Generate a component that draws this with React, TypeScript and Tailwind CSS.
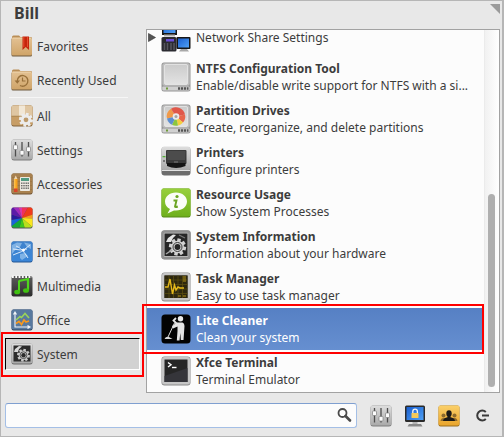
import type { ReactNode } from "react";

function Defs() {
  return (
    <svg className="absolute h-0 w-0" aria-hidden="true">
      <defs>
        <linearGradient id="tan" x1="0" y1="0" x2="0" y2="1">
          <stop offset="0" stopColor="#e3c193" />
          <stop offset="1" stopColor="#cfa468" />
        </linearGradient>
        <linearGradient id="silver" x1="0" y1="0" x2="0" y2="1">
          <stop offset="0" stopColor="#dedede" />
          <stop offset="1" stopColor="#a9a9a9" />
        </linearGradient>
        <linearGradient id="drive" x1="0" y1="0" x2="0" y2="1">
          <stop offset="0" stopColor="#cbcbcb" />
          <stop offset="1" stopColor="#e3e3e3" />
        </linearGradient>
        <linearGradient id="dark" x1="0" y1="0" x2="0" y2="1">
          <stop offset="0" stopColor="#5c5c5c" />
          <stop offset="1" stopColor="#2c2c2c" />
        </linearGradient>
        <linearGradient id="blue" x1="0" y1="0" x2="0" y2="1">
          <stop offset="0" stopColor="#3f82cc" />
          <stop offset="1" stopColor="#3a86d8" />
        </linearGradient>
        <linearGradient id="screen" x1="0" y1="0" x2="1" y2="1">
          <stop offset="0" stopColor="#1a5fd0" />
          <stop offset="1" stopColor="#4fa0f4" />
        </linearGradient>
        <linearGradient id="green" x1="0" y1="0" x2="0" y2="1">
          <stop offset="0" stopColor="#98d03c" />
          <stop offset="1" stopColor="#6fb01c" />
        </linearGradient>
        <linearGradient id="gold" x1="0" y1="0" x2="0" y2="1">
          <stop offset="0" stopColor="#fbd06a" />
          <stop offset="1" stopColor="#e9a52c" />
        </linearGradient>
      </defs>
    </svg>
  );
}

function Svg({ size, children }: { size: 22 | 30; children: ReactNode }) {
  return (
    <svg
      className={size === 22 ? "size-[22px] shrink-0" : "size-[30px] shrink-0"}
      viewBox={size === 22 ? "0 0 22 22" : "0 0 30 30"}
      aria-hidden="true"
    >
      {children}
    </svg>
  );
}

function Folder() {
  return (
    <>
      <path d="M1 2Q1 .5 2.500 .5H8L9.500 2H20Q21 2 21 3.500V19H1Z" fill="#b98e57" />
      <rect x=".5" y="3" width="20.500" height="18.500" rx="1.500" fill="#6e5a3e" />
      <rect x=".5" y="2.500" width="20.500" height="18" rx="1.500" fill="url(#tan)" />
      <path d="M1.500 3.200H20" stroke="#efd6b0" strokeWidth=".8" />
    </>
  );
}

function FavoritesIcon() {
  return (
    <Svg size={22}>
      <Folder />
      <path d="M11.500 1.500H18V15L14.700 12L11.500 15Z" fill="#c5260c" />
      <path d="M12.800 2V12M16.500 2V12" stroke="#f0593a" strokeWidth=".8" />
    </Svg>
  );
}

function RecentIcon() {
  return (
    <Svg size={22}>
      <Folder />
      <path d="M6.300 12A5.300 5.300 0 1 1 9 16.500" fill="none" stroke="#98703a" strokeWidth="1.400" />
      <path d="M3.600 11.500H9L6.300 14.800Z" fill="#98703a" />
      <path d="M11.500 8.500V12H14.500" fill="none" stroke="#98703a" strokeWidth="1.200" />
    </Svg>
  );
}

const teeth = [0, 45, 90, 135, 180, 225, 270, 315];

function Gear({ x, y, r, fill, hole }: { x: number; y: number; r: number; fill: string; hole: string }) {
  return (
    <g transform={`translate(${x} ${y})`}>
      {teeth.map((a) => (
        <rect key={a} x={-r * 0.2} y={-r} width={r * 0.4} height={r} fill={fill} transform={`rotate(${a + 12})`} />
      ))}
      <circle r={r * 0.74} fill={fill} />
      <circle r={r * 0.34} fill={hole} />
    </g>
  );
}

function AllIcon() {
  return (
    <Svg size={22}>
      <rect x=".5" y=".5" width="21" height="21" rx="2" fill="#82633a" />
      <rect x=".5" y=".5" width="21" height="20" rx="2" fill="#c79d65" />
      <path d="M.5 2.500Q.5 .5 2.500 .5H19.500Q21.500 .5 21.500 2.500V11H.5Z" fill="#dfc6a2" />
      <path d="M8 .5H14V11H8Z" fill="#f1e7d6" />
      <path d="M8.500 11H13.500V14H8.500Z" fill="#eadbc1" />
      <path d="M.5 11.200H21.500" stroke="#a37d49" strokeWidth=".8" />
      <Gear x={15} y={14.8} r={7} fill="#ececec" hole="#bd9a6a" />
    </Svg>
  );
}

function Mixer() {
  return (
    <Svg size={22}>
      <rect x=".5" y=".5" width="21" height="21" rx="2.500" fill="#7d7d7d" />
      <rect x=".5" y=".5" width="21" height="20" rx="2.500" fill="url(#silver)" />
      <path d="M4.500 3V17.500M11 3V17.500M17.500 3V17.500" stroke="#4e4e4e" strokeWidth="1.300" />
      <g fill="#fcfcfc" stroke="#7e7e7e" strokeWidth=".7">
        <rect x="2.500" y="6" width="4" height="4.500" rx=".7" />
        <rect x="9" y="11.500" width="4" height="4.500" rx=".7" />
        <rect x="15.500" y="8" width="4" height="4.500" rx=".7" />
      </g>
    </Svg>
  );
}

function AccessoriesIcon() {
  return (
    <Svg size={22}>
      <rect x=".5" y=".5" width="21" height="21" rx="2" fill="#6e5131" />
      <rect x=".5" y=".5" width="21" height="20" rx="2" fill="#a8814f" />
      <path d="M1 4.500H21M1 8.500H21M1 12.500H21M1 16.500H21" stroke="#93703f" strokeWidth=".6" />
      <path d="M3 6L4.700 2.500L6.500 6Z" fill="#f0d7b0" />
      <rect x="3" y="6" width="3.500" height="11" fill="#f5a11c" />
      <path d="M3.800 6V17" stroke="#ffd36a" strokeWidth=".9" />
      <rect x="3" y="15.500" width="3.500" height="3.500" fill="#d8462a" />
      <rect x="9" y="4" width="10" height="14" rx=".8" fill="#ece9e0" />
      <rect x="10" y="5" width="8" height="3" fill="#4f9a80" />
      <g fill="#4e4e4e">
        {[9.5, 12, 14.5].map((y) =>
          [10.2, 12.4, 14.6, 16.6].map((x) => <rect key={`${x}-${y}`} x={x} y={y} width="1.200" height="1.400" />),
        )}
      </g>
    </Svg>
  );
}

function GraphicsIcon() {
  const wedges: [string, string][] = [
    ["M11 11L11 -8L20 -5Z", "#f0305a"],
    ["M11 11L20 -5L30 5Z", "#f03a1a"],
    ["M11 11L30 5L30 12Z", "#f99a1c"],
    ["M11 11L30 12L26 24Z", "#fbe51e"],
    ["M11 11L26 24L16 30Z", "#b8e01a"],
    ["M11 11L16 30L6 30Z", "#3fc81c"],
    ["M11 11L6 30L-6 24Z", "#12a838"],
    ["M11 11L-6 24L-10 15Z", "#1663d8"],
    ["M11 11L-10 15L-10 4Z", "#2a1a9c"],
    ["M11 11L-10 4L-3 -6Z", "#5c1aa8"],
    ["M11 11L-3 -6L5 -8Z", "#a02ac0"],
    ["M11 11L5 -8L11 -8Z", "#d836a8"],
  ];
  return (
    <Svg size={22}>
      <clipPath id="wheel">
        <rect x=".5" y=".5" width="21" height="20" rx="2" />
      </clipPath>
      <rect x=".5" y=".5" width="21" height="21" rx="2" fill="#555" />
      <g clipPath="url(#wheel)">
        {wedges.map(([d, fill]) => (
          <path key={d} d={d} fill={fill} />
        ))}
      </g>
    </Svg>
  );
}

function InternetIcon() {
  return (
    <Svg size={22}>
      <rect x=".5" y=".5" width="21" height="21" rx="2" fill="#245694" />
      <rect x=".5" y=".5" width="21" height="20" rx="2" fill="url(#blue)" />
      <path d="M1 4L6 1.500L11 2L9 6L5 8L1 13ZM13 1.500L20 3V8L16 6ZM9 13L14 12L17 15L11 19L9 17Z" fill="#9cc6ee" opacity=".7" />
      <path d="M2 14Q11 12 19 4M5 5Q11 7 17 17M2 8Q10 10 16 8" fill="none" stroke="#e6f2fd" strokeWidth=".9" />
      <circle cx="12.500" cy="9" r="1.500" fill="#fff" />
    </Svg>
  );
}

function MultimediaIcon() {
  return (
    <Svg size={22}>
      <rect x=".5" y="1" width="21" height="20.500" rx="2" fill="url(#dark)" />
      <path d="M1 1.800H21" stroke="#fafafa" strokeWidth="2.400" strokeDasharray="1.800 1.500" />
      <path d="M8 6L17 4V15" fill="none" stroke="#4fd61c" strokeWidth="2.200" />
      <path d="M8 5.500V17" stroke="#4fd61c" strokeWidth="2" />
      <ellipse cx="6.200" cy="17" rx="3" ry="2.300" fill="#3fc010" />
      <ellipse cx="15" cy="15.500" rx="3" ry="2.300" fill="#3fc010" />
    </Svg>
  );
}

function OfficeIcon() {
  return (
    <Svg size={22}>
      <rect x=".5" y=".5" width="21" height="21" rx="2" fill="#2c435e" />
      <rect x=".5" y=".5" width="21" height="20" rx="2" fill="#58799f" />
      <path d="M4 4V18H18M2.500 5.500L4 3L5.500 5.500M16.500 16.500L19 18L16.500 19.500" fill="none" stroke="#f2f5f8" strokeWidth="1.100" />
      <path d="M5 11L9 7.500L10.500 8.500L14 4.500L18 9" fill="none" stroke="#9bd35a" strokeWidth="1.600" />
      <path d="M5 14.500L8 12.500L10.500 15.500L13 11L15 13L18 12" fill="none" stroke="#f7981e" strokeWidth="1.700" />
    </Svg>
  );
}

function SystemIcon() {
  return (
    <Svg size={22}>
      <rect x=".5" y=".5" width="21" height="21" rx="2.500" fill="#6c6c6c" />
      <rect x=".5" y=".5" width="21" height="20" rx="2.500" fill="url(#silver)" />
      <rect x="2.500" y="2.500" width="17" height="16" fill="#2c2c2c" />
      <path d="M3 9L4 6L8 3L11 3.500L8 6L7 9Z" fill="#d8d8d8" />
      <Gear x={12.5} y={12.2} r={6.4} fill="#c9c9c9" hole="#2c2c2c" />
      <circle cx="12.500" cy="12.200" r="3.400" fill="none" stroke="#3a3a3a" strokeWidth=".8" />
    </Svg>
  );
}

function NetworkIcon() {
  return (
    <Svg size={30}>
      <rect x="1" y="0" width="15" height="13" fill="#161616" />
      <rect x="2.500" y="1.500" width="12" height="9.500" fill="url(#screen)" />
      <path d="M3 12.500H14V14.500H3Z" fill="#b0b0b0" />
      <rect x=".5" y="15" width="15" height="14.500" rx="1.500" fill="#2b2b31" />
      <path d="M3.500 21V28M6.500 21V28M10 21V28M13 21V28" stroke="#56565e" strokeWidth="1.500" />
      <rect x="5" y="17" width="8" height="2.500" fill="#6b4fd8" />
      <rect x="15.500" y="15" width="14" height="12" rx="1" fill="#161616" />
      <rect x="17" y="16.500" width="11" height="9" fill="url(#screen)" />
      <path d="M18 29.500L20 27H26L28 29.500Z" fill="#a8a8a8" />
    </Svg>
  );
}

function DriveBody() {
  return (
    <>
      <rect x=".5" y=".5" width="29" height="29" rx="2.500" fill="#949494" />
      <rect x="1.300" y="1.300" width="27.400" height="22.500" rx="2" fill="#bdbdbd" />
      <rect x="3.500" y="2.500" width="23" height="20" rx="1.500" fill="url(#drive)" stroke="#e9e9e9" strokeWidth=".8" />
      <rect x="1.300" y="24.500" width="27.400" height="4" rx="1" fill="#d0d0d0" />
      <rect x="5" y="25.500" width="2" height="2" fill="#6f9b3a" />
      <path d="M17 26.500H27.500" stroke="#545454" strokeWidth="2.400" strokeDasharray="2.200 .8" />
    </>
  );
}

function NtfsIcon() {
  return (
    <Svg size={30}>
      <DriveBody />
    </Svg>
  );
}

function PartitionIcon() {
  return (
    <Svg size={30}>
      <DriveBody />
      <g transform="translate(15 12.500)">
        <path d="M0 0L-9 2A9.200 9.200 0 0 1 -5 -7.700Z" fill="#f09a4a" />
        <path d="M0 0L-5 -7.700A9.200 9.200 0 0 1 9 -2Z" fill="#e0584a" />
        <path d="M0 0L9 -2A9.200 9.200 0 0 1 7 6Z" fill="#e8664c" />
        <path d="M0 0L7 6A9.200 9.200 0 0 1 2 9Z" fill="#f5cf3e" />
        <path d="M0 0L2 9A9.200 9.200 0 0 1 -4 8.300Z" fill="#8cc63e" />
        <path d="M0 0L-4 8.300A9.200 9.200 0 0 1 -9 2Z" fill="#5e8fd0" />
        <circle r="3.300" fill="#ececec" />
        <circle r="1.500" fill="#a4a4a4" />
      </g>
    </Svg>
  );
}

function PrinterIcon() {
  return (
    <Svg size={30}>
      <rect x=".5" y="1" width="29" height="28.500" rx="3" fill="#6d6d6d" />
      <rect x=".5" y=".5" width="29" height="24" rx="3" fill="url(#silver)" />
      <path d="M1 24.500H29" stroke="#e2e2e2" />
      <rect x="5" y="4" width="20.500" height="14" rx="1" fill="#3a3a3a" />
      <path d="M6 5H24.500L24 14H6.500Z" fill="#4c4c4c" />
      <path d="M6 17H24.500V20Q15 24 6 20Z" fill="#151515" />
      <path d="M13 16H17" stroke="#777" />
      <rect x="1.500" y="10" width="3" height="1.300" fill="#56b43a" />
      <rect x="2" y="14" width="2" height="2" fill="#777" />
    </Svg>
  );
}

function ResourceIcon() {
  return (
    <Svg size={30}>
      <rect x=".5" y=".5" width="29" height="29" rx="2" fill="#568a16" />
      <rect x=".5" y=".5" width="29" height="28" rx="2" fill="url(#green)" />
      <path d="M15 4.500C8.500 4.500 4 8.700 4 13.500C4 17 6 19.500 9 21L6.500 25.500L13 22.400C20.500 23.300 26 19 26 13.500C26 8.700 21.500 4.500 15 4.500Z" fill="#fbfdf8" />
      <circle cx="16" cy="8.500" r="1.600" fill="#6ba522" />
      <path d="M12.500 12.500H15.500L14 18.500Q14.200 19.500 16.800 18.500" fill="none" stroke="#6ba522" strokeWidth="1.900" />
    </Svg>
  );
}

function DarkFrame({ children }: { children: ReactNode }) {
  return (
    <Svg size={30}>
      <rect x=".5" y=".5" width="29" height="29" rx="3" fill="#8a8a8a" />
      <rect x="1" y="1" width="28" height="27.500" rx="2.500" fill="#c6c6c6" />
      <rect x="3.500" y="3.500" width="23" height="22.500" fill="#262626" />
      {children}
    </Svg>
  );
}

function SysInfoIcon() {
  return (
    <DarkFrame>
      <rect x="1.500" y="1.500" width="27" height="26.500" rx="2" fill="none" stroke="#8f8f8f" strokeWidth="2.500" />
      <path d="M5 12L7 8L12 4.500L15 5L12 8L10 12Z" fill="#e4e4e4" />
      <path d="M18 5L24 8" stroke="#777" strokeWidth="1.300" />
      <Gear x={16.5} y={17} r={8.6} fill="#d2d2d2" hole="#262626" />
      <circle cx="16.500" cy="17" r="4.500" fill="none" stroke="#3a3a3a" />
      <path d="M5 24L11 20" stroke="#a8a8a8" strokeWidth="1.500" />
    </DarkFrame>
  );
}

function TaskIcon() {
  return (
    <DarkFrame>
      <rect x="3.500" y="3.500" width="23" height="22.500" fill="#2e280e" />
      <path d="M3.500 8H26.500M3.500 12.500H26.500M3.500 17H26.500M3.500 21.500H26.500M8 3.500V26M12.500 3.500V26M17 3.500V26M21.500 3.500V26" stroke="#5d5011" strokeWidth=".7" />
      <path d="M4 15H7L9 7L11.500 22L13.500 13L15 18L17 15L19 16H23" fill="none" stroke="#e5b91b" strokeWidth="1.400" />
      <path d="M22 5H25M22 7H25M22 9H25M17 24H20M22 24H25" stroke="#b08f18" strokeWidth="1.200" />
    </DarkFrame>
  );
}

function CleanerIcon() {
  return (
    <Svg size={30}>
      <rect x=".5" y=".5" width="29" height="29" rx="3.500" fill="#030303" />
      <circle cx="19.500" cy="4.800" r="2.700" fill="#e9e9e9" />
      <path d="M16 8.500H21.500Q23.500 9 23.500 12L22.500 26H19.800L19.300 19L18.500 26.500H15.800L16.500 17V12.500L12 14.500L11 12Z" fill="#e4e4e4" />
      <path d="M15 4L12.500 6.500L16 10" fill="none" stroke="#e4e4e4" strokeWidth="1.800" />
      <path d="M13.500 9L7 23" stroke="#dadada" strokeWidth="1" />
      <path d="M3.500 25Q5 22 8 23L11.500 25Z" fill="#dadada" />
    </Svg>
  );
}

function TerminalIcon() {
  return (
    <DarkFrame>
      <path d="M3.500 20L26.500 12V26H3.500Z" fill="#35353a" />
      <path d="M7 6.500L10 8.800L7 11" fill="none" stroke="#fff" strokeWidth="1.400" />
      <path d="M11 11.500H15.500" stroke="#fff" strokeWidth="1.400" />
    </DarkFrame>
  );
}

function LockIcon() {
  return (
    <Svg size={22}>
      <rect x="1" y=".5" width="20" height="16.500" rx="1.500" fill="#2a2a2a" />
      <rect x="2.500" y="2" width="17" height="13" fill="url(#screen)" />
      <path d="M8.800 8.500V6.500A2.300 2.300 0 0 1 13.400 6.500V8.500" fill="none" stroke="#f4f4f4" strokeWidth="1.300" />
      <rect x="7.500" y="8" width="7" height="5" rx=".6" fill="#f4c95a" />
      <path d="M8.500 17H13.500V19H8.500Z" fill="#b5b5b5" />
      <path d="M3.500 21.500L5 19H17L18.500 21.500Z" fill="#8a8a8a" />
    </Svg>
  );
}

function UsersIcon() {
  return (
    <Svg size={22}>
      <rect x=".5" y=".5" width="21" height="21" rx="2" fill="#9a6f1e" />
      <rect x=".5" y=".5" width="21" height="20" rx="2" fill="url(#gold)" />
      <g fill="#8c6a2e">
        <circle cx="5.500" cy="10.500" r="2" />
        <circle cx="16.500" cy="10.500" r="2" />
        <path d="M2.500 16Q3 13 5.500 13H16.500Q19 13 19.500 16Z" />
      </g>
      <g fill="#1c1a17">
        <ellipse cx="11" cy="8.500" rx="2.700" ry="3.200" />
        <path d="M5 16Q5.500 13 9.500 12.300V10H12.500V12.300Q16.500 13 17 16Z" />
      </g>
    </Svg>
  );
}

function PowerIcon() {
  return (
    <Svg size={22}>
      <path d="M13.800 7A5 5 0 1 0 13.800 14" fill="none" stroke="#3a3a3a" strokeWidth="2" />
      <path d="M10 10.500H17" stroke="#3a3a3a" strokeWidth="2" />
    </Svg>
  );
}

const topCategories = [
  { label: "Favorites", icon: <FavoritesIcon /> },
  { label: "Recently Used", icon: <RecentIcon /> },
];

const categories = [
  { label: "All", icon: <AllIcon /> },
  { label: "Settings", icon: <Mixer /> },
  { label: "Accessories", icon: <AccessoriesIcon /> },
  { label: "Graphics", icon: <GraphicsIcon /> },
  { label: "Internet", icon: <InternetIcon /> },
  { label: "Multimedia", icon: <MultimediaIcon /> },
  { label: "Office", icon: <OfficeIcon /> },
  { label: "System", icon: <SystemIcon />, active: true },
];

const apps = [
  { text: "Network Share Settings", icon: <NetworkIcon />, expandable: true },
  { name: "NTFS Configuration Tool", text: "Enable/disable write support for NTFS with a si...", icon: <NtfsIcon /> },
  { name: "Partition Drives", text: "Create, reorganize, and delete partitions", icon: <PartitionIcon /> },
  { name: "Printers", text: "Configure printers", icon: <PrinterIcon /> },
  { name: "Resource Usage", text: "Show System Processes", icon: <ResourceIcon /> },
  { name: "System Information", text: "Information about your hardware", icon: <SysInfoIcon /> },
  { name: "Task Manager", text: "Easy to use task manager", icon: <TaskIcon /> },
  { name: "Lite Cleaner", text: "Clean your system", icon: <CleanerIcon />, selected: true },
  { name: "Xfce Terminal", text: "Terminal Emulator", icon: <TerminalIcon /> },
];

function CategoryButton({ label, icon, active }: { label: string; icon: ReactNode; active?: boolean }) {
  return (
    <div className="relative">
      <button
        type="button"
        aria-pressed={!!active}
        className={
          active
            ? "flex h-8 w-full items-center gap-1 border border-t-black border-l-black border-r-white border-b-white bg-[#d2d2d2] pl-[5px] text-left"
            : "flex h-8 w-full items-center gap-1 border border-transparent pl-[5px] text-left"
        }
      >
        {icon}
        <span>{label}</span>
      </button>
      {active && <div className="pointer-events-none absolute -top-1.5 -right-1 -bottom-[7px] -left-1 border-2 border-[#fe0000]" />}
    </div>
  );
}

export default function App() {
  return (
    <div className="flex min-h-screen flex-col border border-r-2 border-[#b6b6b6] bg-[#e8e8e8] font-['Noto_Sans','Open_Sans',sans-serif] text-[12px] leading-[17px] text-[#3c3c3c]">
      <Defs />
      <header className="flex h-7 items-start justify-between pr-0.5 pl-[13px]">
        <h1 className="text-[16px] leading-[24px] font-bold">Bill</h1>
        <button type="button" aria-label="Resize" className="pt-[3px]">
          <svg className="size-[10px]" viewBox="0 0 10 10" aria-hidden="true">
            <path d="M0 0H10V10Z" fill="#9a9a9a" />
          </svg>
        </button>
      </header>

      <main className="flex flex-1">
        <nav className="w-[145px] shrink-0 pt-px pr-1.5 pl-1" aria-label="Categories">
          <div className="flex flex-col gap-0.5">
            {topCategories.map((c) => (
              <CategoryButton key={c.label} {...c} />
            ))}
          </div>
          <hr className="mt-px mr-3 mb-0.5 ml-1 h-px border-0 bg-[#f6f6f6]" />
          <div className="flex flex-col gap-0.5">
            {categories.map((c) => (
              <CategoryButton key={c.label} {...c} />
            ))}
          </div>
        </nav>

        <section className="mr-0.5 flex h-[364px] min-w-0 flex-1 border border-[#a2a2a2] bg-[#fcfcfc]">
          <ul className="flex min-w-0 flex-1 flex-col justify-end overflow-y-clip">
            {apps.map((app) => (
              <li key={app.text} className={app.name ? "relative h-[42px] shrink-0" : "relative h-[38px] shrink-0"}>
                <button
                  type="button"
                  className={
                    app.selected
                      ? "flex h-full w-full items-center bg-linear-to-b from-[#5680c4] to-[#668fd0] text-left text-white"
                      : "flex h-full w-full items-center text-left"
                  }
                >
                  <span className="w-3.5 shrink-0">
                    {app.expandable && (
                      <svg className="ml-px h-[9px] w-[8px]" viewBox="0 0 8 9" aria-hidden="true">
                        <path d="M.5 .5L7.500 4.500L.5 8.500Z" fill="#555" stroke="#333" strokeWidth=".6" />
                      </svg>
                    )}
                  </span>
                  {app.icon}
                  <span className="ml-[5px] min-w-0 whitespace-nowrap">
                    {app.name && <span className="block font-bold">{app.name}</span>}
                    <span className="block">{app.text}</span>
                  </span>
                </button>
                {app.selected && (
                  <div className="pointer-events-none absolute -top-1 -right-px -bottom-1 -left-[5px] z-10 border-2 border-[#fe0000]" />
                )}
              </li>
            ))}
          </ul>
          <div className="ml-px flex w-[15px] shrink-0 flex-col justify-end border-l border-[#ebebeb] bg-linear-to-r from-[#f1f1f1] to-white px-[3px] pb-[5px]">
            <div className="h-[193px] w-[7px] rounded-full bg-[#afafaf]" />
          </div>
        </section>
      </main>

      <footer className="flex h-[43px] items-start gap-[13px] pt-[10px] pr-2 pl-1">
        <div className="flex h-[25px] min-w-0 flex-1 items-center rounded-[3px] border border-[#a4bfe6] border-t-[#7f9fd0] bg-[#fcfcfc] pr-1">
          <input type="search" aria-label="Search" className="h-full min-w-0 flex-1 bg-transparent px-2 outline-none" />
          <svg className="size-[15px] shrink-0" viewBox="0 0 15 15" aria-hidden="true">
            <circle cx="5.500" cy="5" r="4" fill="none" stroke="#4a4a4a" strokeWidth="1.800" />
            <path d="M8.500 8L13 12.500" stroke="#4a4a4a" strokeWidth="2.600" strokeLinecap="round" />
          </svg>
        </div>
        <div className="flex gap-3 pt-0.5">
          <button type="button" aria-label="All settings">
            <Mixer />
          </button>
          <button type="button" aria-label="Lock screen">
            <LockIcon />
          </button>
          <button type="button" aria-label="Switch users">
            <UsersIcon />
          </button>
          <button type="button" aria-label="Log out">
            <PowerIcon />
          </button>
        </div>
      </footer>
    </div>
  );
}
